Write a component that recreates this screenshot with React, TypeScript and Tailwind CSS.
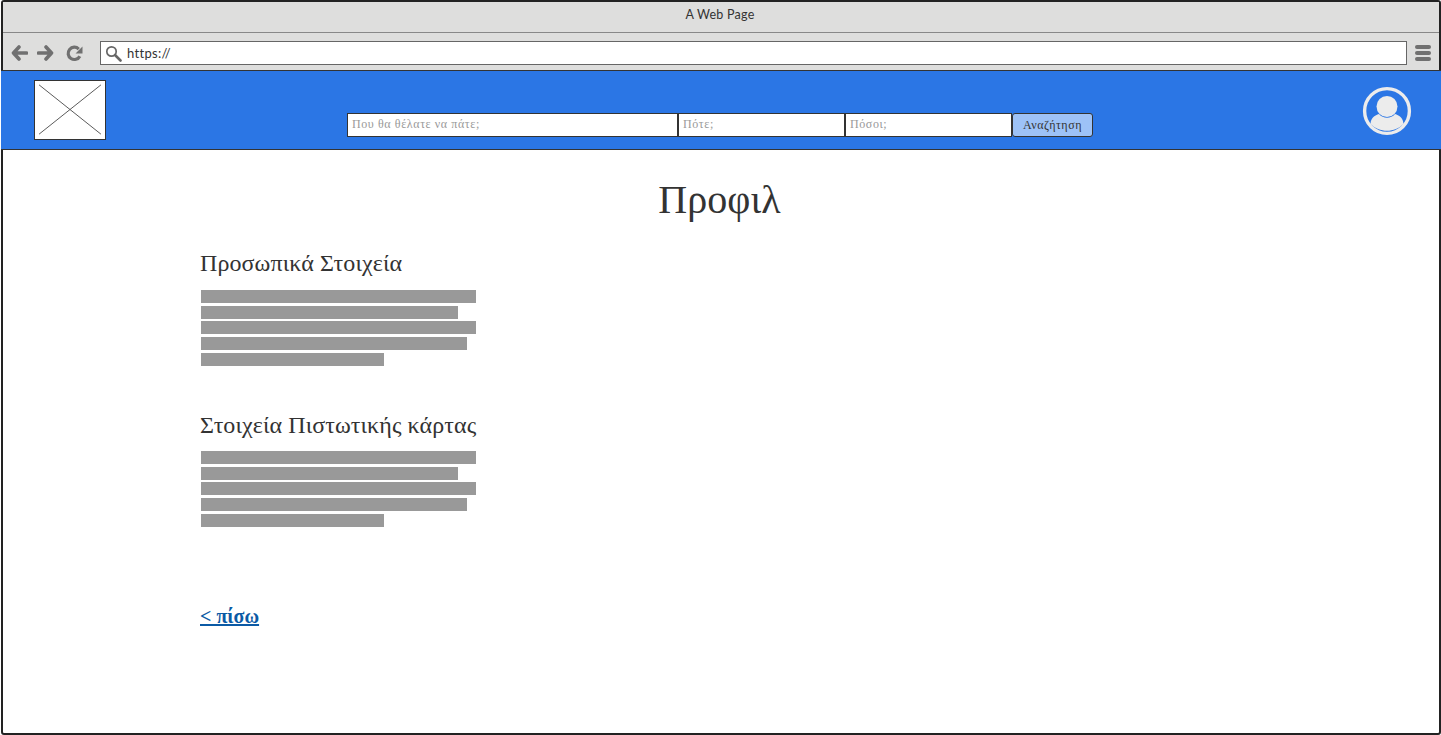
import React from "react";

const widths = ["w-[275px]", "w-[257px]", "w-[275px]", "w-[266px]", "w-[183px]"];

function TextBlock() {
  return (
    <div className="flex flex-col gap-[2.67px] ml-px">
      {widths.map((w, i) => (
        <div key={i} className={`h-[13px] bg-[#999999] ${w}`} />
      ))}
    </div>
  );
}

function Field({ text, className }: { text: string; className: string }) {
  return (
    <div className={`h-[24px] bg-white border border-[#333] flex items-center pl-[4px] pb-[2px] text-[12px] text-[#999] tracking-[0.6px] ${className}`}>
      {text}
    </div>
  );
}

export default function App() {
  return (
    <div className="w-[1441px] h-[735px] overflow-hidden bg-white">
      <div className="h-[735px] w-[1440px] ml-px border-2 border-[#222] rounded-[3px] flex flex-col bg-white" style={{ fontFamily: '"Liberation Serif", serif' }}>
        <div className="h-[31px] shrink-0 bg-[#dededd] border-b border-[#888] flex justify-center pt-[5px] text-[12.5px] leading-[15px] text-[#333] tracking-[0.25px]" style={{ fontFamily: '"Lato", sans-serif' }}>
          <span className="-ml-[2px]">A Web Page</span>
        </div>
        <div className="h-[37px] shrink-0 bg-[#dededd] flex items-center pl-[8px] pr-[8px] pt-[3px]">
          <svg width="17" height="16" viewBox="0 0 17 16">
            <path d="M8 2 L2.5 8 L8 14 M3 8 H15.5" fill="none" stroke="#707070" strokeWidth="3.6" strokeLinecap="round" strokeLinejoin="round" />
          </svg>
          <svg width="17" height="16" viewBox="0 0 17 16" className="ml-[9px]">
            <path d="M9 2 L14.5 8 L9 14 M14 8 H1.5" fill="none" stroke="#707070" strokeWidth="3.6" strokeLinecap="round" strokeLinejoin="round" />
          </svg>
          <svg width="17" height="17" viewBox="0 0 16 16" className="ml-[12px]">
            <path d="M13 10.5 A5.8 5.8 0 1 1 12 3.8" fill="none" stroke="#707070" strokeWidth="3" />
            <path d="M15.5 1.5 V8 H9 Z" fill="#707070" />
          </svg>
          <div className="ml-[17px] h-[24px] flex-1 bg-white border border-[#666] flex items-center pl-[4px]">
            <svg width="17" height="17" viewBox="0 0 17 17">
              <circle cx="6.5" cy="6.5" r="4.7" fill="none" stroke="#666" strokeWidth="1.7" />
              <path d="M10 10 L15.5 15.5" stroke="#666" strokeWidth="2.6" strokeLinecap="round" />
            </svg>
            <span className="ml-[5px] mt-[2px] text-[13px] text-[#333] tracking-[0.3px]" style={{ fontFamily: '"Lato", sans-serif' }}>https://</span>
          </div>
          <div className="ml-[8px] w-[16px] flex flex-col gap-[2px]">
            <div className="h-[4px] rounded-full bg-[#707070]" />
            <div className="h-[4px] rounded-full bg-[#707070]" />
            <div className="h-[4px] rounded-full bg-[#707070]" />
          </div>
        </div>
        <div className="-mx-[2px] h-[80px] shrink-0 bg-[#2b76e5] border-y border-[#333] flex items-start">
          <svg width="72" height="60" viewBox="0 0 72 60" className="ml-[33px] mt-[9px] bg-white border border-[#333] shrink-0">
            <path d="M4 4 L68 55 M68 4 L4 55" stroke="#555" strokeWidth="1" />
          </svg>
          <div className="ml-[241px] mt-[42px] flex">
            <Field text="Που θα θέλατε να πάτε;" className="w-[331px]" />
            <Field text="Πότε;" className="w-[167px]" />
            <Field text="Πόσοι;" className="w-[167px]" />
            <div className="w-[81px] h-[24px] bg-[#9dc2f7] border border-[#333] rounded-[3px] flex items-center justify-center text-[12px] text-[#333] tracking-[0.55px]">
              Αναζήτηση
            </div>
          </div>
          <svg width="50" height="50" viewBox="0 0 50 50" className="ml-auto mr-[29px] mt-[14.5px]">
            <circle cx="25" cy="25" r="22.4" fill="none" stroke="#ececec" strokeWidth="3.4" />
            <circle cx="25" cy="20.5" r="10.5" fill="#ececec" />
            <path d="M8.5 38 C9 31 13 29.5 17 28 C21 33 29 33 33 28 C37 29.5 41 31 41.5 38 C33 47 17 47 8.5 38 Z" fill="#ececec" />
          </svg>
        </div>
        <div className="flex-1 flex flex-col pl-[197px]">
          <h1 className="pt-[25px] pr-[200px] text-center text-[#333] text-[40px] leading-[50px] tracking-[0.1px]">Προφιλ</h1>
          <h2 className="mt-[24px] text-[24px] leading-[28px] text-[#333] tracking-[0.09px]">Προσωπικά Στοιχεία</h2>
          <div className="mt-[13px]"><TextBlock /></div>
          <h2 className="mt-[45px] text-[24px] leading-[28px] text-[#333] tracking-[0.09px]">Στοιχεία Πιστωτικής κάρτας</h2>
          <div className="mt-[12.34px]"><TextBlock /></div>
          <a className="mt-[78.66px] w-fit text-[20px] leading-[23px] text-[#0b5aa5] underline font-bold">&lt; πίσω</a>
        </div>
      </div>
    </div>
  );
}
